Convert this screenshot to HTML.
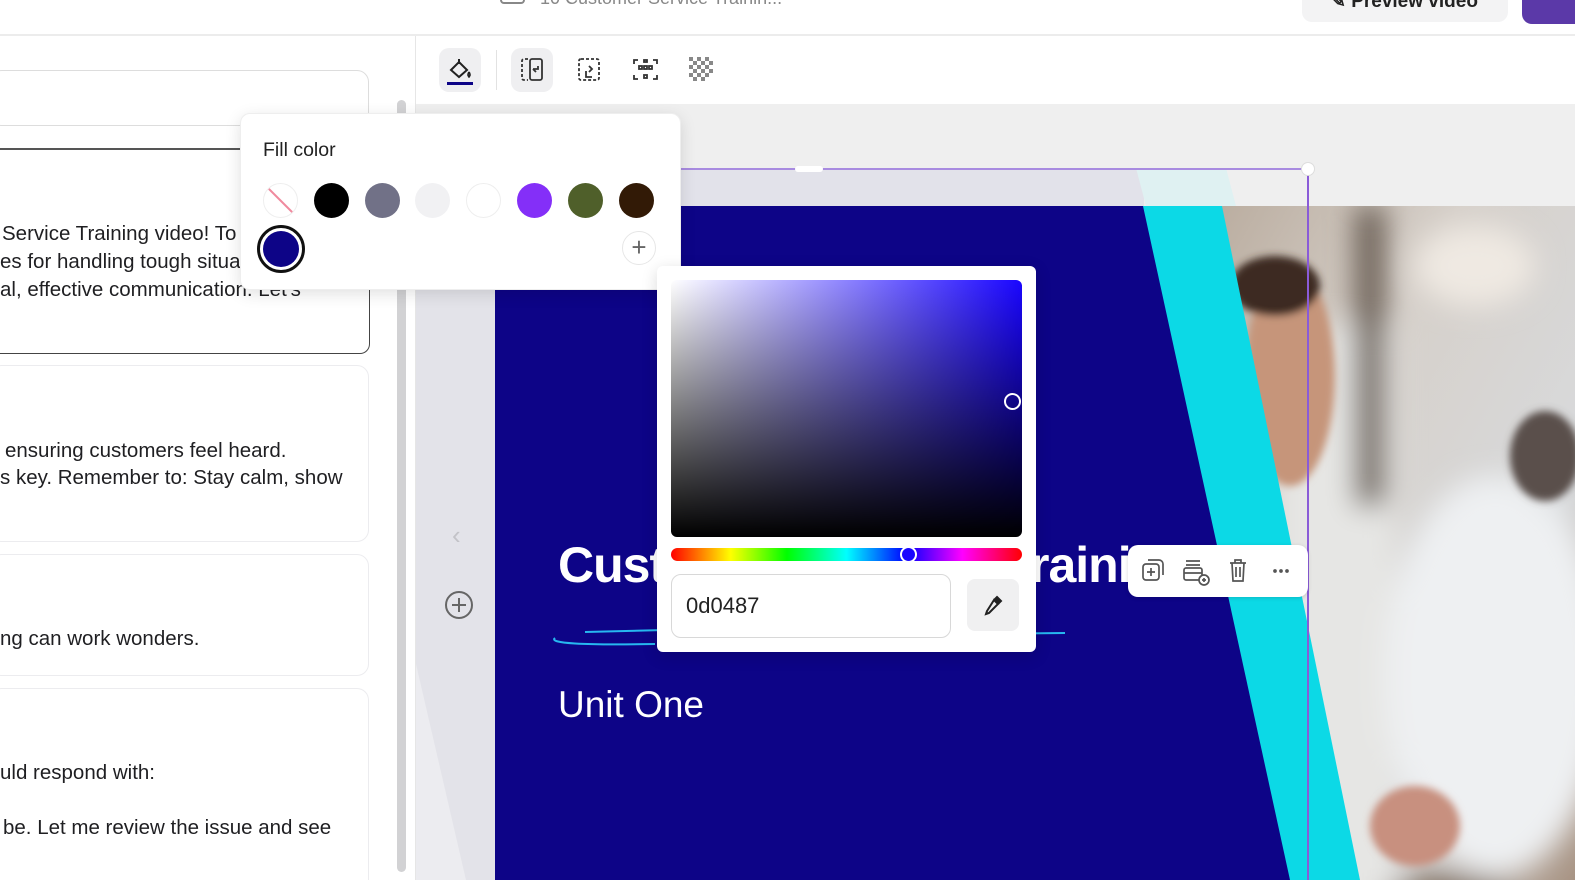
<!DOCTYPE html>
<html><head><meta charset="utf-8"><style>
*{margin:0;padding:0;box-sizing:border-box}
html,body{width:1575px;height:880px;overflow:hidden}
body{background:#fff;font-family:"Liberation Sans",sans-serif;position:relative;color:#1d1d1f}
.a{position:absolute}
.card{position:absolute;left:-10px;width:379px;border:1px solid #ececef;border-radius:12px;background:#fff}
.t{position:absolute;font-size:20.5px;color:#1f1f22;white-space:nowrap}
.sw{position:absolute;width:35px;height:35px;border-radius:50%;top:183px}
</style></head><body>
<!-- top bar -->
<div class="a" style="left:0;top:34px;width:1575px;height:2px;background:#ececec"></div>
<div class="a" style="left:500px;top:-12px;width:25px;height:16px;border:2px solid #888;border-radius:4px"></div>
<div class="t" style="left:540px;top:-12px;color:#888;font-size:18px">10 Customer Service Trainin...</div>
<div class="a" style="left:1302px;top:-12px;width:206px;height:34px;background:#f3f3f4;border-radius:10px"></div>
<div class="t" style="left:1330px;top:-10px;font-size:19px;font-weight:bold;color:#222">✎ Preview video</div>
<div class="a" style="left:1522px;top:-12px;width:53px;height:36px;background:#5b39a8;border-radius:10px 0 0 10px"></div>

<!-- left panel -->
<div class="card" style="top:70px;height:56px;border-color:#ddd"></div>
<div class="a" style="left:-10px;top:148px;width:380px;height:206px;border:1.5px solid #444;border-radius:0 0 10px 10px;border-top:2px solid #555"></div>
<div class="t" style="left:2px;top:222px">Service Training video! To</div>
<div class="t" style="left:0;top:250px">es for handling tough situat</div>
<div class="t" style="left:0;top:278px">al, effective communication. Let's</div>
<div class="card" style="top:365px;height:177px"></div>
<div class="t" style="left:5px;top:439px">ensuring customers feel heard.</div>
<div class="t" style="left:0;top:466px">s key. Remember to: Stay calm, show</div>
<div class="card" style="top:554px;height:122px"></div>
<div class="t" style="left:0;top:627px">ng can work wonders.</div>
<div class="card" style="top:688px;height:192px;border-bottom:none;border-radius:12px 12px 0 0"></div>
<div class="t" style="left:0;top:761px">uld respond with:</div>
<div class="t" style="left:3px;top:816px">be. Let me review the issue and see</div>
<div class="a" style="left:397px;top:100px;width:9px;height:772px;background:#d2d2d4;border-radius:5px"></div>
<div class="a" style="left:415px;top:36px;width:1px;height:844px;background:#e6e6e6"></div>

<!-- toolbar -->
<div class="a" style="left:439px;top:48px;width:42px;height:44px;background:#efeff1;border-radius:10px"></div>
<svg class="a" style="left:446px;top:56px" width="28" height="32" viewBox="0 0 28 32"><path d="M5 14 L13 6 L21 14 L13 21 Z M13 3 L13 8" fill="none" stroke="#222" stroke-width="2"/><path d="M23 16 q-2 3 0 5 q2 -2 0 -5" fill="none" stroke="#222" stroke-width="1.6"/><rect x="1" y="26" width="26" height="3" fill="#0d0487"/></svg>
<div class="a" style="left:496px;top:50px;width:1px;height:40px;background:#e2e2e2"></div>
<div class="a" style="left:511px;top:48px;width:42px;height:44px;background:#efeff1;border-radius:10px"></div>
<svg class="a" style="left:520px;top:57px" width="25" height="25" viewBox="0 0 25 25" fill="none" stroke="#333" stroke-width="1.8"><path d="M8 2H4a2 2 0 0 0-2 2v17a2 2 0 0 0 2 2h4" stroke-dasharray="3 2"/><rect x="10" y="2" width="12" height="21" rx="2"/><path d="M13 12h5v-3M16 15l-3-3"/></svg>
<svg class="a" style="left:577px;top:57px" width="25" height="25" viewBox="0 0 25 25" fill="none" stroke="#333" stroke-width="1.8"><rect x="2" y="2" width="20" height="21" rx="2" stroke-dasharray="3 2"/><path d="M9 14v6h6M12 9l3 3-3 3"/></svg>
<svg class="a" style="left:632px;top:57px" width="27" height="25" viewBox="0 0 27 25" fill="none" stroke="#333" stroke-width="1.8"><path d="M2 7V3h4M21 3h4v4M25 18v4h-4M6 22H2v-4"/><rect x="7" y="9" width="3" height="3"/><rect x="12" y="9" width="3" height="3"/><rect x="17" y="9" width="3" height="3"/><rect x="12" y="3" width="3" height="2"/><rect x="12" y="18" width="3" height="3"/></svg>
<svg class="a" style="left:689px;top:57px" width="24" height="25" viewBox="0 0 24 25"><g fill="#888"><rect x="0" y="0" width="4" height="4"/><rect x="8" y="0" width="4" height="4"/><rect x="16" y="0" width="4" height="4"/><rect x="4" y="4" width="4" height="4"/><rect x="12" y="4" width="4" height="4"/><rect x="20" y="4" width="4" height="4"/><rect x="0" y="8" width="4" height="4"/><rect x="8" y="8" width="4" height="4"/><rect x="16" y="8" width="4" height="4"/><rect x="4" y="12" width="4" height="4"/><rect x="12" y="12" width="4" height="4"/><rect x="20" y="12" width="4" height="4"/><rect x="0" y="16" width="4" height="4"/><rect x="8" y="16" width="4" height="4"/><rect x="16" y="16" width="4" height="4"/><rect x="4" y="20" width="4" height="4"/><rect x="12" y="20" width="4" height="4"/></g></svg>

<!-- canvas -->
<div class="a" style="left:416px;top:104px;width:1159px;height:776px;background:#efefef"></div>
<svg class="a" style="left:416px;top:104px" width="1159" height="776">
<polygon points="0,160 79,160 79,776 0,776" fill="#e3e3e9"/>
<polygon points="0,560 0,776 50,776" fill="#ececf0"/>
<polygon points="264,64 728,64 728,102 264,102" fill="#e2e2ea"/>
<polygon points="720,64 810,64 820,102 730,102" fill="#dff1f2"/>
</svg>
<svg class="a" style="left:495px;top:206px" width="1080" height="674">
<defs><linearGradient id="ph" x1="0" y1="0" x2="1" y2="1"><stop offset="0" stop-color="#b8aa9c"/><stop offset=".35" stop-color="#d6d0ca"/><stop offset=".7" stop-color="#d8dadc"/><stop offset="1" stop-color="#a89484"/></linearGradient>
<clipPath id="cp"><polygon points="720,0 1080,0 1080,674 860,674"/></clipPath>
<filter id="b" x="-50%" y="-50%" width="200%" height="200%"><feGaussianBlur stdDeviation="14"/></filter>
<filter id="b2" x="-50%" y="-50%" width="200%" height="200%"><feGaussianBlur stdDeviation="4"/></filter></defs>
<rect width="1080" height="674" fill="#0d0487"/>
<g clip-path="url(#cp)">
<rect x="700" width="380" height="674" fill="url(#ph)"/>
<g filter="url(#b)"><rect x="780" y="120" width="120" height="600" fill="#e6e6e4"/><ellipse cx="1000" cy="470" rx="110" ry="200" fill="#eef0f2"/><rect x="860" y="0" width="30" height="300" fill="#6a5e55"/><ellipse cx="980" cy="60" rx="60" ry="40" fill="#efe9e2"/><ellipse cx="960" cy="730" rx="90" ry="60" fill="#7a6a5c"/></g>
<g filter="url(#b2)"><ellipse cx="795" cy="170" rx="45" ry="110" fill="#c6957a"/><ellipse cx="780" cy="80" rx="45" ry="30" fill="#3c2c22"/><ellipse cx="1050" cy="250" rx="35" ry="45" fill="#5a504c"/><ellipse cx="920" cy="620" rx="45" ry="40" fill="#c8907f"/></g>
</g>
<polygon points="648,0 727,0 865,674 795,674" fill="#0cd9e6"/>
<path d="M60 432 Q50 440 160 438 M90 426 L170 424 M470 428 L570 427" stroke="#27b8f0" stroke-width="2" fill="none"/>
</svg>
<div class="a" style="left:558px;top:536px;font-size:50px;font-weight:bold;color:#fff;letter-spacing:-1px">Cust</div>
<div class="a" style="left:1030px;top:536px;font-size:50px;font-weight:bold;color:#fff;letter-spacing:-1px">raini</div>
<div class="a" style="left:558px;top:684px;font-size:37px;color:#fff">Unit One</div>

<!-- selection -->
<div class="a" style="left:680px;top:168px;width:628px;height:2px;background:#a88be0"></div>
<div class="a" style="left:1307px;top:169px;width:2px;height:711px;background:#8a5bd8"></div>
<div class="a" style="left:1301px;top:162px;width:14px;height:14px;border-radius:50%;background:#fff;border:1px solid #ddd"></div>
<div class="a" style="left:795px;top:166px;width:28px;height:6px;border-radius:3px;background:#fff"></div>

<!-- arrows -->
<div class="a" style="left:452px;top:520px;font-size:26px;color:#c3c3c8">‹</div>
<svg class="a" style="left:444px;top:590px" width="30" height="30" fill="none" stroke="#666" stroke-width="2"><circle cx="15" cy="15" r="13"/><path d="M15 8v14M8 15h14"/></svg>

<!-- floating toolbar -->
<div class="a" style="left:1128px;top:545px;width:180px;height:52px;background:#fff;border-radius:10px;box-shadow:0 1px 4px rgba(0,0,0,.15)"></div>
<svg class="a" style="left:1142px;top:558px" width="160" height="28" fill="none" stroke="#555" stroke-width="1.7">
<rect x="1" y="6" width="16" height="16" rx="3"/><path d="M6 2h11a4 4 0 0 1 4 4v11M9 10v8M5 14h8"/>
<path d="M44 3h14M44 7h14"/><rect x="42" y="10" width="18" height="12" rx="2"/><path d="M42 15h18"/><circle cx="62" cy="22" r="5" fill="#fff"/><path d="M62 20v4M60 22h4"/>
<path d="M88 5h16M93 5V2h6v3M90 5l1 18h10l1-18M94 9v10M98 9v10"/>
<circle cx="133" cy="13" r="1" fill="#555"/><circle cx="139" cy="13" r="1" fill="#555"/><circle cx="145" cy="13" r="1" fill="#555"/>
</svg>

<!-- fill color popover -->
<div class="a" style="left:240px;top:113px;width:441px;height:177px;background:#fff;border-radius:10px;box-shadow:0 4px 16px rgba(0,0,0,.12);border:1px solid #eee"></div>
<div class="a" style="left:263px;top:139px;font-size:19.5px;color:#222">Fill color</div>
<div class="sw" style="left:263px;border:1px solid #eee;overflow:hidden"><div style="position:absolute;left:16px;top:-3px;width:2px;height:40px;background:#f08a9e;transform:rotate(-45deg)"></div></div>
<div class="sw" style="left:314px;background:#000"></div>
<div class="sw" style="left:365px;background:#717187"></div>
<div class="sw" style="left:415px;background:#f1f1f3"></div>
<div class="sw" style="left:466px;background:#fff;border:1px solid #eee"></div>
<div class="sw" style="left:517px;background:#842ff8"></div>
<div class="sw" style="left:568px;background:#4f5f2a"></div>
<div class="sw" style="left:619px;background:#321a06"></div>
<div class="a" style="left:257px;top:225px;width:48px;height:48px;border-radius:50%;border:3px solid #111;background:#fff"></div>
<div class="a" style="left:263px;top:231px;width:36px;height:36px;border-radius:50%;background:#0d0487"></div>
<div class="a" style="left:622px;top:231px;width:34px;height:34px;border-radius:50%;border:1px solid #e6e6e6;text-align:center;line-height:30px;font-size:26px;color:#666">+</div>

<!-- color picker -->
<div class="a" style="left:657px;top:266px;width:379px;height:386px;background:#fff;border-radius:6px;box-shadow:0 4px 16px rgba(0,0,0,.15)"></div>
<div class="a" style="left:671px;top:280px;width:351px;height:257px;border-radius:6px;background:linear-gradient(to bottom,rgba(0,0,0,0),#000),linear-gradient(to right,#fff,#1a06ff)"></div>
<div class="a" style="left:1004px;top:393px;width:17px;height:17px;border-radius:50%;border:2px solid #fff"></div>
<div class="a" style="left:671px;top:548px;width:351px;height:13px;border-radius:7px;background:linear-gradient(to right,#f00,#ff0 17%,#0f0 33%,#0ff 50%,#00f 67%,#f0f 83%,#f00)"></div>
<div class="a" style="left:900px;top:546px;width:17px;height:17px;border-radius:50%;border:2px solid #fff;background:#1a06ff"></div>
<div class="a" style="left:671px;top:574px;width:280px;height:64px;border:1px solid #d8d8d8;border-radius:10px"></div>
<div class="a" style="left:686px;top:593px;font-size:22px;color:#222">0d0487</div>
<div class="a" style="left:967px;top:579px;width:52px;height:52px;background:#f0f0f1;border-radius:8px"></div>
<svg class="a" style="left:982px;top:594px" width="22" height="22" fill="none" stroke="#222" stroke-width="2"><path d="M14 4l4 4M12 6l4 4-9 9-3 1 1-3z"/><path d="M15 3l4 4-2 2-4-4z" fill="#222"/></svg>
</body></html>
